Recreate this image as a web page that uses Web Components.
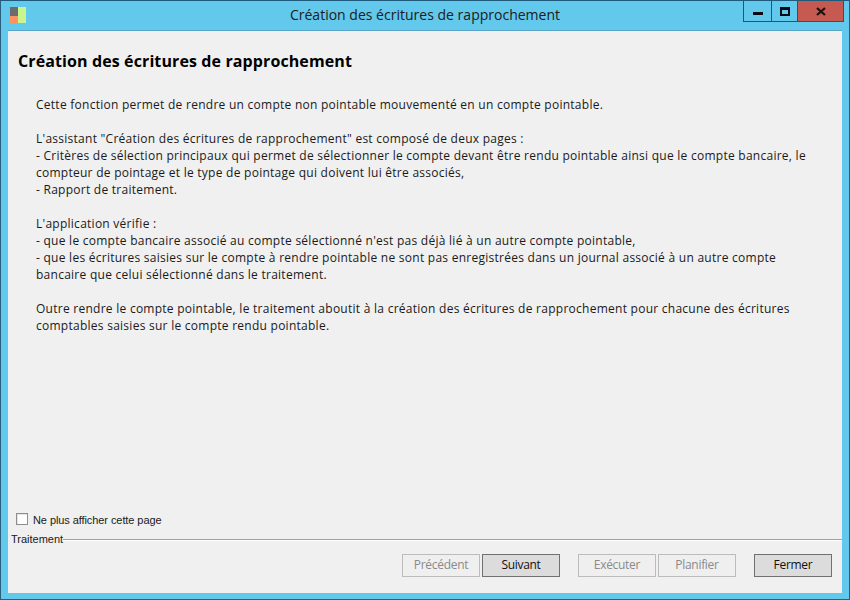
<!DOCTYPE html>
<html lang="fr">
<head>
<meta charset="utf-8">
<title>Création des écritures de rapprochement</title>
<style>
  html, body { margin: 0; padding: 0; height: 100%; background: #62c8ec; }
</style>
</head>
<body>
<wizard-window caption="Création des écritures de rapprochement">
  <wizard-page heading="Création des écritures de rapprochement">
    <p>Cette fonction permet de rendre un compte non pointable mouvementé en un compte pointable.</p>
    <p>L'assistant "Création des écritures de rapprochement" est composé de deux pages :<br>
    - Critères de sélection principaux qui permet de sélectionner le compte devant être rendu pointable ainsi que le compte bancaire, le<br>
    compteur de pointage et le type de pointage qui doivent lui être associés,<br>
    - Rapport de traitement.</p>
    <p>L'application vérifie :<br>
    - que le compte bancaire associé au compte sélectionné n'est pas déjà lié à un autre compte pointable,<br>
    - que les écritures saisies sur le compte à rendre pointable ne sont pas enregistrées dans un journal associé à un autre compte<br>
    bancaire que celui sélectionné dans le traitement.</p>
    <p>Outre rendre le compte pointable, le traitement aboutit à la création des écritures de rapprochement pour chacune des écritures<br>
    comptables saisies sur le compte rendu pointable.</p>
  </wizard-page>
  <wizard-check slot="check">Ne plus afficher cette page</wizard-check>
  <wizard-footer slot="footer" legend="Traitement">
    <wizard-button disabled>Précédent</wizard-button>
    <wizard-button>Suivant</wizard-button>
    <wizard-button disabled class="group">Exécuter</wizard-button>
    <wizard-button disabled>Planifier</wizard-button>
    <wizard-button class="group">Fermer</wizard-button>
  </wizard-footer>
</wizard-window>

<script>
// fenetre complete : barre de titre + zone client
class WizardWindow extends HTMLElement {
  constructor() {
    super();
    this.attachShadow({ mode: "open" });
    this.shadowRoot.innerHTML = `
      <style>
        :host {
          display: flex;
          flex-direction: column;
          box-sizing: border-box;
          width: 850px;
          height: 600px;
          background: #62c8ec;
          border: 1px solid #2b5f7e;
          border-top-color: #1d5a7c;
          font-family: "Open Sans", "Liberation Sans", sans-serif;
        }
        .bar {
          display: flex;
          align-items: flex-start;
          height: 30px;
          flex: none;
          position: relative;
        }
        .icon {
          width: 16px;
          height: 16px;
          margin: 6px 0 0 9px;
          flex: none;
        }
        .caption {
          position: absolute;
          left: 0;
          right: 0;
          top: 4px;
          text-align: center;
          font-size: 14px;
          line-height: 20px;
          letter-spacing: 0.01px;
          color: #1b1b1b;
        }
        .ctrls {
          display: flex;
          margin-left: auto;
          margin-right: 5px;
          position: relative;
        }
        .ctrls div {
          box-sizing: border-box;
          height: 21px;
          border: 1px solid #2b5468;
          border-top: none;
          margin-left: -1px;
          display: flex;
          align-items: center;
          justify-content: center;
        }
        .min { width: 29px; }
        .max { width: 27px; }
        .close { width: 47px; background: #c75a50; }
        .client {
          flex: 1;
          display: flex;
          flex-direction: column;
          min-height: 0;
          margin: 0 7px 6px 7px;
          background: #f0f0f0;
          box-shadow: 0 -1px 0 #5aa3c4;
        }
        .body { flex: 1; min-height: 0; }
      </style>
      <div class="bar">
        <svg class="icon" viewBox="0 0 16 16">
          <rect x="0" y="0" width="8" height="9" fill="#6c6c6c"/>
          <rect x="0" y="9" width="8" height="7" fill="#fb9460"/>
          <rect x="8" y="0" width="8" height="16" fill="#c9f58e"/>
        </svg>
        <div class="caption"></div>
        <div class="ctrls">
          <div class="min"><svg width="10" height="4" viewBox="0 0 10 4" style="margin-top:6px"><rect width="10" height="3" fill="#0a0a14"/></svg></div>
          <div class="max"><svg width="10" height="9" viewBox="0 0 10 9"><path d="M0 0h10v9H0z M2 3v4h6V3z" fill="#0a0a14" fill-rule="evenodd"/></svg></div>
          <div class="close"><svg width="10" height="9" viewBox="0 0 10 9"><path d="M1 1l8 7M9 1L1 8" stroke="#1c1212" stroke-width="2.3" fill="none"/></svg></div>
        </div>
      </div>
      <div class="client">
        <div class="body"><slot></slot></div>
        <slot name="check"></slot>
        <slot name="footer"></slot>
      </div>
    `;
  }

  connectedCallback() {
    this.shadowRoot.querySelector(".caption").textContent = this.getAttribute("caption");
  }
}

// page de l'assistant : titre + texte
class WizardPage extends HTMLElement {
  constructor() {
    super();
    this.attachShadow({ mode: "open" });
    this.shadowRoot.innerHTML = `
      <style>
        :host { display: block; padding: 19px 0 0 10px; color: #1a1a1a; }
        h1 {
          margin: 0;
          font-size: 16px;
          line-height: 22px;
          font-weight: 700;
          letter-spacing: 0.11px;
          color: #000;
        }
        .text {
          margin: 24px 0 0 18px;
          font-size: 12px;
          line-height: 17px;
          white-space: nowrap;
          letter-spacing: 0.26px;
        }
        ::slotted(p) { margin: 0 0 17px 0; }
      </style>
      <h1></h1>
      <div class="text"><slot></slot></div>
    `;
  }

  connectedCallback() {
    this.shadowRoot.querySelector("h1").textContent = this.getAttribute("heading");
  }
}

class WizardCheck extends HTMLElement {
  constructor() {
    super();
    this.attachShadow({ mode: "open" });
    this.shadowRoot.innerHTML = `
      <style>
        :host {
          display: flex;
          align-items: center;
          gap: 5px;
          height: 16px;
          padding-left: 8px;
          margin-bottom: 5px;
          font-family: "Liberation Sans", Arial, sans-serif;
          font-size: 11px;
          letter-spacing: -0.08px;
          color: #1a1a1a;
        }
        .box {
          box-sizing: border-box;
          width: 12px;
          height: 12px;
          margin-bottom: 3px;
          background: #fff;
          border: 1px solid #8e8e8e;
          box-shadow: inset 1px 1px 0 #e4e4e4;
        }
      </style>
      <span class="box"></span><span><slot></slot></span>
    `;
  }
}

// groupe du bas : legende, filet, rangee de boutons
class WizardFooter extends HTMLElement {
  constructor() {
    super();
    this.attachShadow({ mode: "open" });
    this.shadowRoot.innerHTML = `
      <style>
        :host { display: block; height: 60px; flex: none; }
        .head {
          display: flex;
          align-items: center;
          height: 12px;
          padding-left: 3px;
          font-family: "Liberation Sans", Arial, sans-serif;
          font-size: 11px;
          color: #1a1a1a;
        }
        .rule {
          flex: 1;
          height: 1px;
          background: #a0a0a0;
          box-shadow: 0 1px 0 #fff;
        }
        .row {
          display: flex;
          justify-content: flex-end;
          gap: 2px;
          padding: 9px 10px 0 0;
        }
        ::slotted(.group) { margin-left: 16px; }
      </style>
      <div class="head"><span></span><div class="rule"></div></div>
      <div class="row"><slot></slot></div>
    `;
  }

  connectedCallback() {
    this.shadowRoot.querySelector(".head span").textContent = this.getAttribute("legend");
  }
}

class WizardButton extends HTMLElement {
  constructor() {
    super();
    this.attachShadow({ mode: "open" });
    this.shadowRoot.innerHTML = `
      <style>
        :host {
          display: flex;
          align-items: center;
          justify-content: center;
          box-sizing: border-box;
          width: 78px;
          height: 23px;
          padding-bottom: 2px;
          background: #dcdcdc;
          border: 1px solid #707070;
          font-size: 12px;
          letter-spacing: -0.3px;
          color: #111;
        }
        :host([disabled]) {
          background: #efefef;
          border-color: #bcbcbc;
          color: #8a8a8a;
        }
      </style>
      <slot></slot>
    `;
  }
}

window.customElements.define("wizard-window", WizardWindow);
window.customElements.define("wizard-page", WizardPage);
window.customElements.define("wizard-check", WizardCheck);
window.customElements.define("wizard-footer", WizardFooter);
window.customElements.define("wizard-button", WizardButton);
</script>
</body>
</html>
